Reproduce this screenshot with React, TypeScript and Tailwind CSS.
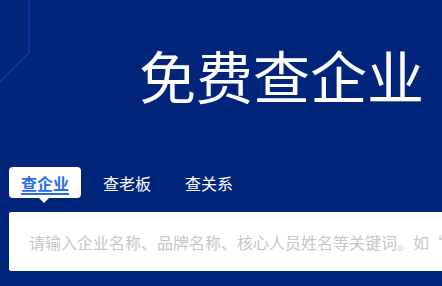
export default function App() {
  const tabs = ["查企业", "查老板", "查关系"];

  return (
    <div className="relative w-[442px] h-[286px] overflow-hidden bg-[#00257a] font-['Noto_Sans_CJK_SC',sans-serif]">
      {/* 背景线条 */}
      <svg className="absolute left-0 top-0" width="60" height="100" viewBox="0 0 60 100">
        <polyline points="29,0 29,53 0,82" fill="none" stroke="#0a3aa6" strokeWidth="1.6" />
      </svg>

      <div className="relative pl-[139px] pt-[39px]">
        <h1 className="text-[57px] leading-[70px] font-normal text-white whitespace-nowrap">免费查企业</h1>
      </div>

      {/* TABS */}
      <div className="relative flex items-center mt-[58px] ml-[9px] h-[31px]">
        {tabs.map((t, i) =>
          i === 0 ? (
            <div key={t} className="relative h-[31px] w-[72px] bg-white rounded-[4px] flex items-center justify-center">
              <span className="text-[16px] font-bold text-[#2a6cf0] underline underline-offset-[3px] decoration-[1.5px] leading-none">
                {t}
              </span>
              <span className="absolute left-[30px] -bottom-[5px] w-0 h-0 border-l-[5px] border-r-[5px] border-t-[5px] border-l-transparent border-r-transparent border-t-white" />
            </div>
          ) : (
            <span key={t} className={`text-[16px] text-white leading-none ${i === 1 ? "ml-[22px]" : "ml-[34px]"}`}>
              {t}
            </span>
          )
        )}
      </div>

      {/* SEARCH */}
      <div className="relative mt-[14px] ml-[9px] w-[500px] h-[59px] bg-white rounded-[2px] flex items-center pl-[20px]">
        <span className="text-[16px] text-[#c4c6cc] whitespace-nowrap">
          请输入企业名称、品牌名称、核心人员姓名等关键词。如“小米科技”
        </span>
      </div>
    </div>
  );
}
